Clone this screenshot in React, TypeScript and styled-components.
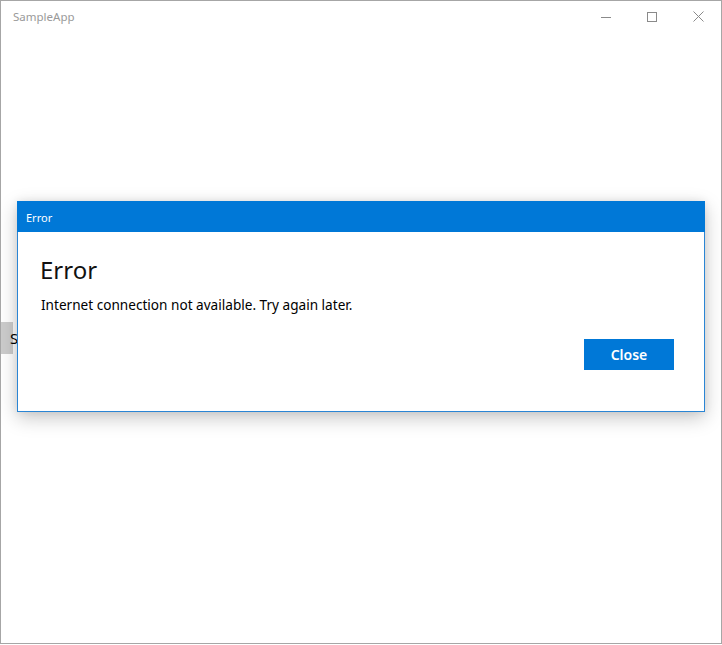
import React from "react";
import styled, { createGlobalStyle } from "styled-components";

const Global = createGlobalStyle`
  html, body { margin: 0; padding: 0; background: #ffffff; }
  * { box-sizing: border-box; }
  body { font-family: "Noto Sans", "Open Sans", "Liberation Sans", sans-serif; }
`;

const Window = styled.div`
  width: 722px;
  height: 644px;
  border: 1px solid #a6a6a6;
  background: #ffffff;
  display: flex;
  flex-direction: column;
  position: relative;
  overflow: hidden;
`;

const TitleBar = styled.div`
  height: 31px;
  display: flex;
  align-items: center;
  flex-shrink: 0;
`;

const AppTitle = styled.div`
  flex: 1;
  padding-left: 12px;
  font-size: 11.5px;
  color: #9a9a9a;
  margin-top: -1px;
`;

const Controls = styled.div`
  display: flex;
  height: 100%;
`;

const CtrlButton = styled.div`
  width: 46px;
  height: 100%;
  display: flex;
  align-items: center;
  justify-content: center;
  color: #8a8a8a;
`;

const Content = styled.div`
  flex: 1;
  position: relative;
  display: flex;
  flex-direction: column;
  padding-top: 290px;
`;

const BackButton = styled.div`
  width: 120px;
  height: 32px;
  background: #cccccc;
  margin-left: -108px;
  display: flex;
  align-items: center;
  padding-left: 117px;
  font-size: 15px;
  color: #000;
`;

const Dialog = styled.div`
  position: absolute;
  left: 16px;
  top: 169px;
  width: 688px;
  height: 211px;
  border: 1px solid #2a85d4;
  background: #ffffff;
  box-shadow: 0 6px 18px rgba(0, 0, 0, 0.22), 0 0 8px rgba(0, 0, 0, 0.08);
  display: flex;
  flex-direction: column;
`;

const DialogHeader = styled.div`
  height: 31px;
  background: #0078d7;
  color: #ffffff;
  font-size: 11px;
  display: flex;
  align-items: center;
  padding-left: 9px;
  margin: -1px -1px 0 -1px;
  padding-top: 1px;
`;

const DialogBody = styled.div`
  flex: 1;
  display: flex;
  flex-direction: column;
  padding: 22px 30px 41px 22px;
`;

const DialogTitle = styled.div`
  font-size: 24px;
  line-height: 32px;
  color: #111;
  font-weight: 400;
`;

const DialogText = styled.div`
  font-size: 13.6px;
  line-height: 20px;
  color: #000;
  margin-top: 9px;
  margin-left: 1px;
`;

const Footer = styled.div`
  margin-top: auto;
  display: flex;
  justify-content: flex-end;
`;

const PrimaryButton = styled.div`
  width: 90px;
  height: 31px;
  background: #0078d7;
  color: #ffffff;
  font-size: 14px;
  font-weight: 600;
  display: flex;
  align-items: center;
  justify-content: center;
`;

export default function App() {
  return (
    <>
      <Global />
      <Window>
        <TitleBar>
          <AppTitle>SampleApp</AppTitle>
          <Controls>
            <CtrlButton>
              <svg width="10" height="10" viewBox="0 0 10 10">
                <line x1="0" y1="5.5" x2="10" y2="5.5" stroke="currentColor" strokeWidth="1" />
              </svg>
            </CtrlButton>
            <CtrlButton>
              <svg width="10" height="10" viewBox="0 0 10 10">
                <rect x="0.5" y="0.5" width="9" height="9" fill="none" stroke="currentColor" strokeWidth="1" />
              </svg>
            </CtrlButton>
            <CtrlButton>
              <svg width="11" height="11" viewBox="0 0 11 11">
                <path d="M0.5 0.5 L10.5 10.5 M10.5 0.5 L0.5 10.5" stroke="currentColor" strokeWidth="1" />
              </svg>
            </CtrlButton>
          </Controls>
        </TitleBar>
        <Content>
          <BackButton>S</BackButton>
          <Dialog>
            <DialogHeader>Error</DialogHeader>
            <DialogBody>
              <DialogTitle>Error</DialogTitle>
              <DialogText>Internet connection not available. Try again later.</DialogText>
              <Footer>
                <PrimaryButton>Close</PrimaryButton>
              </Footer>
            </DialogBody>
          </Dialog>
        </Content>
      </Window>
    </>
  );
}
